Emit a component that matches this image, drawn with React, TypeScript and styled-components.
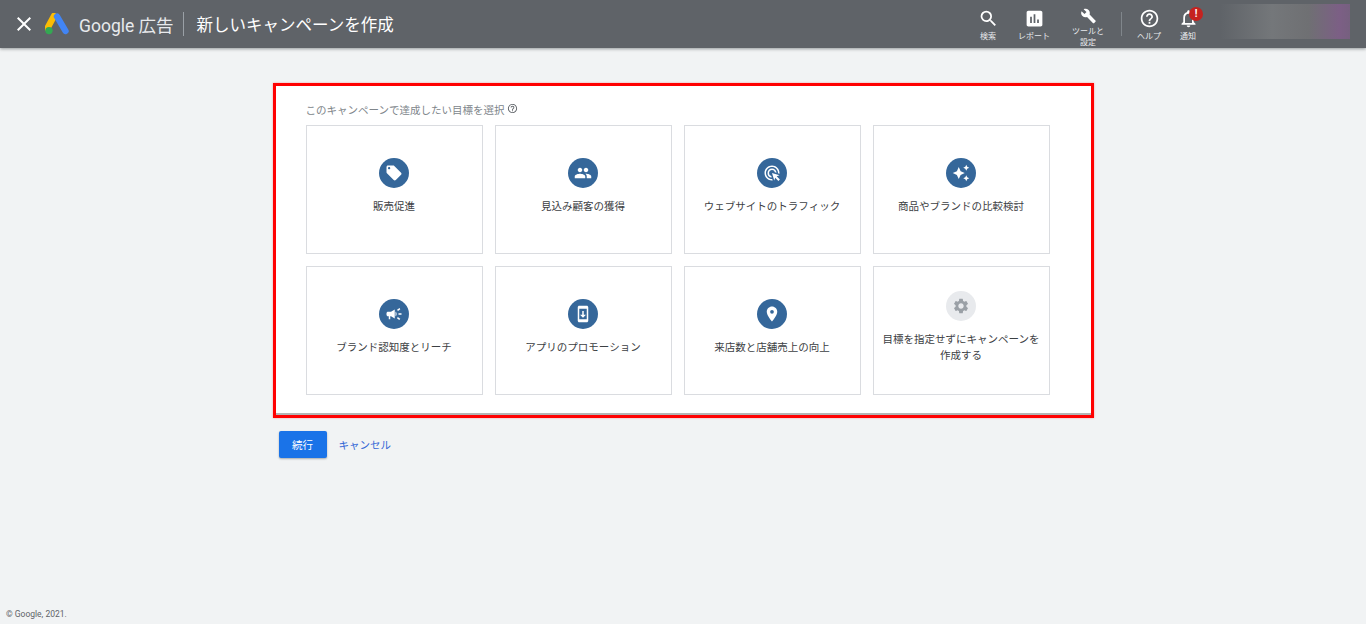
import React from "react";
import styled, { createGlobalStyle } from "styled-components";
import {
  MdAdsClick,
  MdAssessment,
  MdAutoAwesome,
  MdBuild,
  MdCampaign,
  MdClose,
  MdHelpOutline,
  MdLocalOffer,
  MdNotificationsNone,
  MdPeople,
  MdPlace,
  MdSearch,
  MdSettings,
  MdSystemUpdate,
} from "react-icons/md";

const GlobalStyle = createGlobalStyle`
  html, body {
    margin: 0;
    padding: 0;
    background: #f1f3f4;
    font-family: Roboto, "Noto Sans CJK JP", sans-serif;
  }
`;

const Page = styled.div`
  display: flex;
  flex-direction: column;
  height: 624px;
  overflow: hidden;
`;

const TopBar = styled.header`
  display: flex;
  flex: none;
  justify-content: space-between;
  align-items: stretch;
  height: 48px;
  padding: 0 16px 0 12px;
  background: #5f6368;
  box-shadow: 0 1px 3px rgba(60, 64, 67, 0.5);
  color: #fff;
`;

const TopLeft = styled.div`
  display: flex;
  align-items: center;
`;

const CloseIcon = styled(MdClose)`
  font-size: 24px;
  margin-right: 9px;
`;

const Brand = styled.span`
  margin-left: 10px;
  font-size: 17.5px;
  color: #e8eaed;
  white-space: nowrap;
`;

const TitleRule = styled.span`
  width: 1px;
  height: 24px;
  margin: 0 13px 0 9px;
  background: #9aa0a6;
`;

const Title = styled.h1`
  margin: 0;
  font-size: 16.5px;
  font-weight: 400;
  white-space: nowrap;
`;

const TopRight = styled.nav`
  display: flex;
`;

const NavItem = styled.div<{ $w: number }>`
  position: relative;
  display: flex;
  flex-direction: column;
  align-items: center;
  width: ${(p) => p.$w}px;
  padding-top: 8px;
  font-size: 8px;
  line-height: 11px;
  text-align: center;
  color: #e8eaed;
  svg {
    font-size: 21px;
    color: #fff;
    margin-bottom: 2px;
  }
`;

const NavRule = styled.span`
  width: 1px;
  height: 24px;
  margin: 12px 5px 0 2px;
  background: #80868b;
`;

const AlertBadge = styled.span`
  position: absolute;
  top: 7px;
  left: 18px;
  width: 14px;
  height: 14px;
  border-radius: 50%;
  background: #c5221f;
  font-size: 10px;
  font-weight: 700;
  line-height: 14px;
  color: #fff;
`;

const BlurredAccount = styled.div`
  width: 130px;
  height: 35px;
  margin: 4px 0 0 15px;
  background: linear-gradient(90deg, #5f6368 0%, #74777a 40%, #6f7073 68%, #7c5f85 92%, #76607f 100%);
`;

const Main = styled.main`
  flex: 1;
  width: 821px;
  margin: 35px auto 0;
`;

const Highlight = styled.section`
  height: 335px;
  box-sizing: border-box;
  border: 3px solid #ff0000;
  box-shadow: 0 0 2px rgba(255, 0, 0, 0.35);
`;

const Panel = styled.div`
  height: 100%;
  box-sizing: border-box;
  padding: 15px 30px 0;
  background: #fff;
  box-shadow: inset 0 -2px 0 #b4b4b4;
`;

const Prompt = styled.div`
  display: flex;
  align-items: center;
  gap: 3px;
  height: 16px;
  margin-bottom: 8px;
  font-size: 10.5px;
  color: #80868b;
  svg {
    font-size: 11px;
    margin-top: -2px;
    color: #5f6368;
  }
`;

const GoalGrid = styled.div`
  display: grid;
  grid-template-columns: repeat(4, 177px);
  grid-auto-rows: 129px;
  gap: 12px;
`;

const GoalCard = styled.div<{ $muted?: boolean }>`
  display: flex;
  flex-direction: column;
  align-items: center;
  box-sizing: border-box;
  padding: ${(p) => (p.$muted ? "24px" : "32px")} 8px 0;
  border: 1px solid #dadce0;
  background: #fff;
`;

const GoalIcon = styled.span<{ $muted?: boolean }>`
  display: flex;
  align-items: center;
  justify-content: center;
  width: 30px;
  height: 30px;
  border-radius: 50%;
  background: ${(p) => (p.$muted ? "#e8eaed" : "#35679a")};
  color: ${(p) => (p.$muted ? "#9aa0a6" : "#fff")};
  font-size: 18px;
`;

const GoalText = styled.div`
  margin-top: 11px;
  font-size: 10.5px;
  line-height: 16px;
  text-align: center;
  color: #3c4043;
`;

const Actions = styled.div`
  display: flex;
  align-items: center;
  gap: 12px;
  margin: 13px 0 0 6px;
`;

const ContinueButton = styled.button`
  width: 48px;
  height: 27px;
  padding: 0;
  border: none;
  border-radius: 2px;
  background: #1a73e8;
  box-shadow: 0 1px 2px rgba(60, 64, 67, 0.4);
  font: inherit;
  font-size: 10.5px;
  color: #fff;
`;

const CancelLink = styled.a`
  font-size: 10.5px;
  color: #3367d6;
`;

const Footer = styled.footer`
  flex: none;
  padding: 0 0 4px 6px;
  font-size: 8.5px;
  line-height: 12px;
  color: #5f6368;
`;

const AdsLogo = () => (
  <svg width="24" height="22" viewBox="0 0 24 22" aria-hidden="true">
    <path d="M9 3 L2.5 15" stroke="#fbbc04" strokeWidth="6.4" strokeLinecap="round" />
    <path d="M12 3.5 L20.5 18" stroke="#4285f4" strokeWidth="6.4" strokeLinecap="round" />
    <circle cx="4" cy="17.6" r="3.7" fill="#34a853" />
  </svg>
);

const goals = [
  { text: "販売促進", icon: <MdLocalOffer /> },
  { text: "見込み顧客の獲得", icon: <MdPeople /> },
  { text: "ウェブサイトのトラフィック", icon: <MdAdsClick /> },
  { text: "商品やブランドの比較検討", icon: <MdAutoAwesome /> },
  { text: "ブランド認知度とリーチ", icon: <MdCampaign /> },
  { text: "アプリのプロモーション", icon: <MdSystemUpdate /> },
  { text: "来店数と店舗売上の向上", icon: <MdPlace /> },
  { text: "目標を指定せずにキャンペーンを作成する", icon: <MdSettings />, muted: true },
];

const App = () => {
  return (
    <Page>
      <GlobalStyle />
      <TopBar>
        <TopLeft>
          <CloseIcon />
          <AdsLogo />
          <Brand>Google 広告</Brand>
          <TitleRule />
          <Title>新しいキャンペーンを作成</Title>
        </TopLeft>
        <TopRight>
          <NavItem $w={46}>
            <MdSearch />
            検索
          </NavItem>
          <NavItem $w={46}>
            <MdAssessment />
            レポート
          </NavItem>
          <NavItem $w={62}>
            <MdBuild />
            ツールと
            <br />
            設定
          </NavItem>
          <NavRule />
          <NavItem $w={44}>
            <MdHelpOutline />
            ヘルプ
          </NavItem>
          <NavItem $w={34}>
            <MdNotificationsNone />
            通知
            <AlertBadge>!</AlertBadge>
          </NavItem>
          <BlurredAccount />
        </TopRight>
      </TopBar>
      <Main>
        <Highlight>
          <Panel>
            <Prompt>
              このキャンペーンで達成したい目標を選択
              <MdHelpOutline />
            </Prompt>
            <GoalGrid>
              {goals.map((goal) => (
                <GoalCard key={goal.text} $muted={goal.muted}>
                  <GoalIcon $muted={goal.muted}>{goal.icon}</GoalIcon>
                  <GoalText>{goal.text}</GoalText>
                </GoalCard>
              ))}
            </GoalGrid>
          </Panel>
        </Highlight>
        <Actions>
          <ContinueButton>続行</ContinueButton>
          <CancelLink>キャンセル</CancelLink>
        </Actions>
      </Main>
      <Footer>© Google, 2021.</Footer>
    </Page>
  );
};

export default App;
